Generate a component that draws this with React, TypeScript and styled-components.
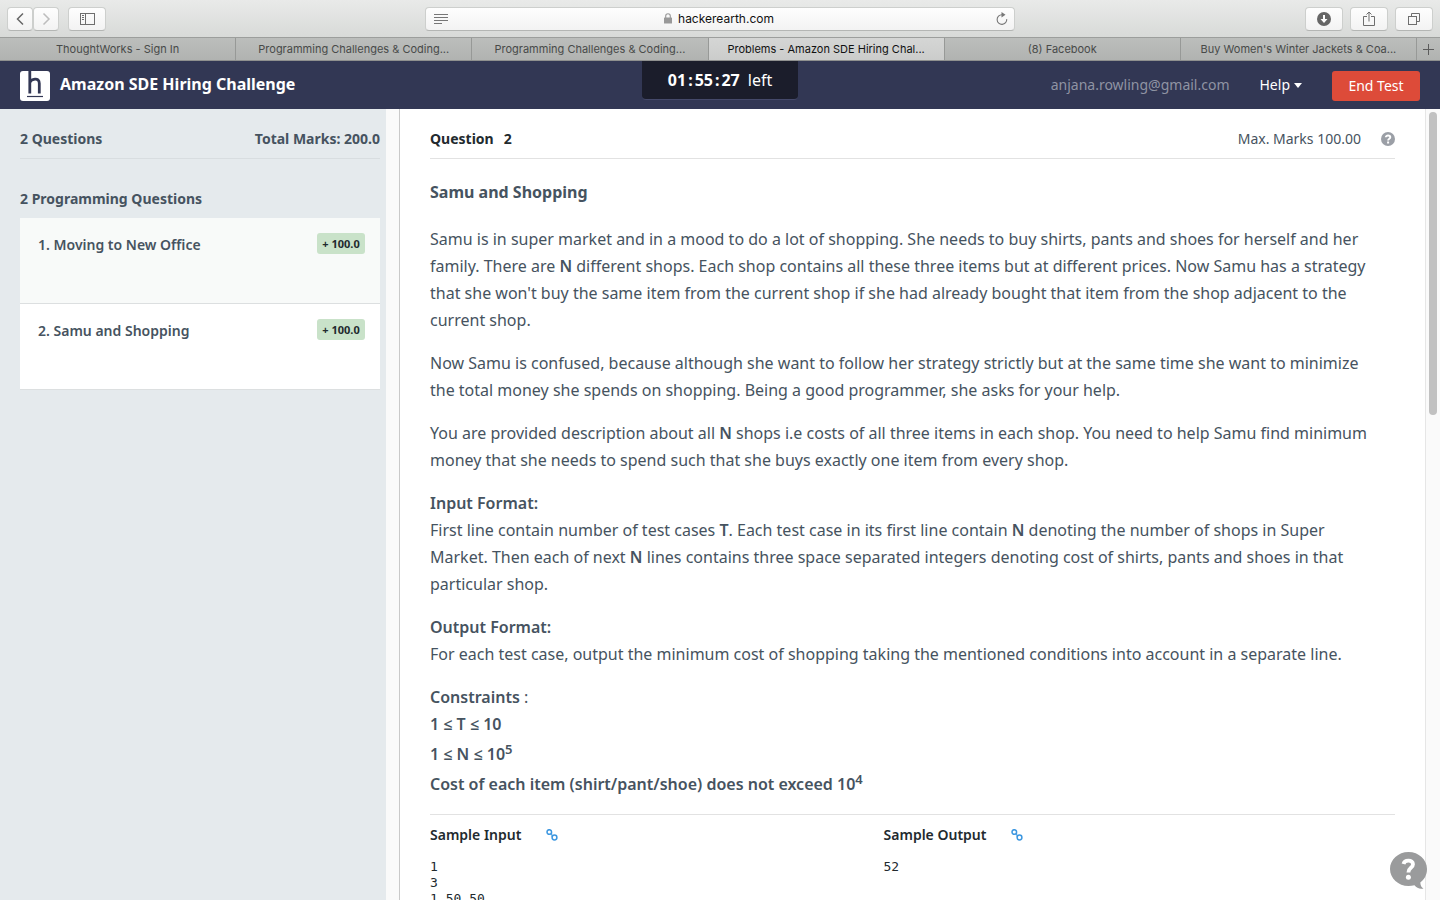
import React from "react";
import styled, { createGlobalStyle } from "styled-components";

const GlobalStyle = createGlobalStyle`
  *, *::before, *::after { box-sizing: border-box; }
  body {
    margin: 0;
    background: #fff;
    color: #465360;
    font-family: "Noto Sans", "Open Sans", sans-serif;
    font-size: 14px;
    line-height: 20px;
  }
  h1, h2, h3, p, pre, ol { margin: 0; padding: 0; }
  button { font: inherit; color: inherit; border: 0; margin: 0; padding: 0; background: none; cursor: pointer; }
  a { color: inherit; text-decoration: none; }
`;

const Page = styled.div`
  display: flex;
  flex-direction: column;
  height: 100vh;
  overflow: hidden;
`;

/* Browser chrome */

const Toolbar = styled.div`
  flex: none;
  display: grid;
  grid-template-columns: 1fr minmax(200px, 590px) 1fr;
  align-items: center;
  height: 37px;
  padding: 0 7px;
  background: linear-gradient(#e9eae9, #d8dad8);
`;

const ToolGroup = styled.div<{ $gap: number; $end?: boolean }>`
  display: flex;
  gap: ${(p) => p.$gap}px;
  justify-content: ${(p) => (p.$end ? "flex-end" : "flex-start")};
`;

const ToolButton = styled.button<{ $narrow?: boolean }>`
  display: flex;
  align-items: center;
  justify-content: center;
  width: ${(p) => (p.$narrow ? 26 : 38)}px;
  height: 24px;
  border: 1px solid #cdcfcd;
  border-bottom-color: #b4b6b4;
  border-radius: 4px;
  background: linear-gradient(#fefefe, #f3f3f3);
  color: #6e6e6e;
`;

const AddressBar = styled.div`
  display: grid;
  grid-template-columns: 16px 1fr 16px;
  align-items: center;
  height: 24px;
  padding: 0 2px 0 8px;
  border: 1px solid #cdcfcd;
  border-bottom-color: #b4b6b4;
  border-radius: 4px;
  background: linear-gradient(#fefefe, #f3f3f3);
  color: #777;
`;

const Address = styled.div`
  display: flex;
  align-items: center;
  justify-content: center;
  gap: 6px;
  padding-right: 8px;
  color: #111;
  font: 12px/16px Inter, sans-serif;
`;

const Tabs = styled.nav`
  flex: none;
  display: flex;
  height: 24px;
  border-top: 1px solid #9c9e9c;
  border-bottom: 1px solid #8f908f;
  background: linear-gradient(#bcbebc, #b1b3b1);
  font: 11px/22px Inter, sans-serif;
`;

const Tab = styled.a<{ $active?: boolean }>`
  flex: 1 1 0;
  min-width: 0;
  padding: 0 8px;
  border-right: 1px solid #979997;
  background: ${(p) => (p.$active ? "linear-gradient(#d5d6d5, #cbcccb)" : "none")};
  color: ${(p) => (p.$active ? "#111" : "#484a49")};
  text-align: center;
  white-space: nowrap;
  overflow: hidden;
`;

const NewTab = styled.button`
  flex: none;
  display: flex;
  align-items: center;
  justify-content: center;
  width: 23px;
  color: #5c5c5c;
`;

/* Test header */

const Header = styled.header`
  flex: none;
  display: grid;
  grid-template-columns: 1fr auto 1fr;
  height: 48px;
  padding: 0 20px;
  background: #323754;
  color: #fff;
`;

const Brand = styled.div`
  display: flex;
  align-items: flex-start;
  gap: 10px;
  padding-top: 10px;
`;

const BrandTitle = styled.h1`
  font-size: 16px;
  line-height: 26px;
  font-weight: 700;
`;

const Timer = styled.div`
  display: flex;
  justify-content: center;
  gap: 8px;
  width: 156px;
  height: 39px;
  border-radius: 0 0 4px 4px;
  border-bottom: 1px solid #45496a;
  background: #1b1d2b;
  font-size: 16px;
  line-height: 38px;
`;

const Clock = styled.b`
  display: flex;
  gap: 2px;
`;

const Account = styled.div`
  display: flex;
  align-items: flex-start;
  justify-content: flex-end;
  gap: 30px;
  padding-top: 10px;
  line-height: 28px;
`;

const Email = styled.span`
  color: #8f93a3;
`;

const HelpMenu = styled.button`
  display: flex;
  align-items: center;
  gap: 4px;
`;

const EndTest = styled.button`
  width: 88px;
  height: 30px;
  border-radius: 3px;
  background: #dd4b39;
  color: #fff;
`;

/* Body */

const Body = styled.div`
  flex: 1;
  min-height: 0;
  display: flex;
`;

const Sidebar = styled.aside`
  flex: none;
  display: flex;
  width: 400px;
  background: #e5eaed;
  border-right: 1px solid #c9c9c9;
`;

const SidebarContent = styled.div`
  flex: 1;
  padding: 0 6px 0 20px;
  font-weight: 700;
`;

const Gutter = styled.div<{ $line?: boolean }>`
  flex: none;
  width: ${(p) => (p.$line ? 15 : 13)}px;
  padding: 3px 3px 0;
  border-left: ${(p) => (p.$line ? "1px solid #e6e6e6" : "0")};
  background: #fafafa;
`;

const Thumb = styled.div`
  width: 8px;
  height: 303px;
  border-radius: 4px;
  background: #c1c1c1;
`;

const Bar = styled.div`
  display: flex;
  align-items: center;
  justify-content: space-between;
  height: 50px;
  padding-top: 10px;
  border-bottom: 1px solid #d8dde0;
`;

const SectionTitle = styled.h2`
  margin-top: 30px;
  padding-bottom: 9px;
  font-size: 14px;
  line-height: 20px;
  font-weight: 700;
`;

const QuestionList = styled.ol`
  list-style: none;
`;

const QuestionItem = styled.li<{ $current?: boolean }>`
  border-bottom: 1px solid #dcdfe0;
  background: ${(p) => (p.$current ? "#fff" : "#f8faf9")};
`;

const QuestionLink = styled.a`
  display: flex;
  justify-content: space-between;
  align-items: flex-start;
  height: 85px;
  padding: 15px 15px 0 18px;
  font-weight: 600;
  line-height: 24px;
`;

const Marks = styled.span`
  width: 48px;
  border-radius: 3px;
  background: #c9e2c9;
  color: #222a2e;
  font-size: 11px;
  line-height: 21px;
  font-weight: 700;
  text-align: center;
`;

const Main = styled.main`
  flex: 1;
  min-width: 0;
  padding: 0 30px;
  overflow: hidden;
`;

const MainBar = styled(Bar)`
  border-bottom-color: #e2e2e2;
`;

const QuestionNumber = styled.h2`
  display: flex;
  gap: 10px;
  color: #222a2e;
  font-size: 14px;
  line-height: 20px;
  font-weight: 700;
`;

const MaxMarks = styled.div`
  display: flex;
  align-items: center;
  gap: 20px;
`;

const Problem = styled.article`
  padding: 20px 0 16px;
  border-bottom: 1px solid #e2e2e2;
  font-size: 16px;
  line-height: 27px;
`;

const ProblemTitle = styled.h3`
  margin-bottom: 20px;
  font-size: 16px;
  font-weight: 700;
`;

const Paragraph = styled.p`
  padding-right: 16px;
  & + & { margin-top: 16px; }
`;

const Strong = styled.strong`
  font-weight: 600;
`;

const ConstraintLine = styled.span<{ $tall?: boolean }>`
  display: block;
  padding-top: ${(p) => (p.$tall ? 3 : 0)}px;
  font-weight: 600;
`;

const Power = styled.sup`
  font-size: 13px;
  line-height: 0;
`;

const Samples = styled.section`
  display: grid;
  grid-template-columns: 47fr 53fr;
  padding-top: 10px;
  color: #222a2e;
`;

const SampleHead = styled.h3`
  display: flex;
  align-items: center;
  gap: 25px;
  margin-bottom: 14px;
  font-size: 14px;
  line-height: 20px;
  font-weight: 600;
`;

const SampleText = styled.pre`
  font: 13px/16px "DejaVu Sans Mono", monospace;
`;

const CopyLink = styled.a`
  display: flex;
  color: #3c97e0;
`;

const Support = styled.button`
  position: absolute;
  right: 13px;
  bottom: 10px;
  width: 37px;
  height: 38px;
`;

/* Icons */

const Chevron = ({ right }: { right?: boolean }) => (
  <svg width="10" height="14" viewBox="0 0 10 14" fill="none" stroke={right ? "#bdbdbd" : "#666"} strokeWidth="1.5">
    <path d={right ? "M2.500 1.500 8 7 2.500 12.500" : "M8 1.500 2.500 7 8 12.500"} />
  </svg>
);

const SidebarIcon = () => (
  <svg width="15" height="12" viewBox="0 0 15 12" fill="none" stroke="currentColor">
    <rect x=".5" y=".5" width="14" height="11" />
    <path d="M5.500 0v12M2 2.500h2M2 4.500h2M2 6.500h2" />
  </svg>
);

const ReaderIcon = () => (
  <svg width="14" height="12" viewBox="0 0 14 12" stroke="currentColor">
    <path d="M0 1.500h14M0 4.500h14M0 7.500h14M0 10.500h8" />
  </svg>
);

const LockIcon = () => (
  <svg width="8" height="11" viewBox="0 0 8 11">
    <rect y="4.500" width="8" height="6" rx=".6" fill="#999" />
    <path d="M1.700 5V3a2.300 2.300 0 0 1 4.600 0v2" fill="none" stroke="#999" strokeWidth="1.100" />
  </svg>
);

const ReloadIcon = () => (
  <svg width="12" height="14" viewBox="0 0 12 14">
    <path d="M6 2.800a4.800 4.800 0 1 0 4.700 4.300" fill="none" stroke="currentColor" strokeWidth="1.100" />
    <path d="M5.500 0 9.500 2.800 5.500 5.500z" fill="currentColor" />
  </svg>
);

const DownloadIcon = () => (
  <svg width="14" height="14" viewBox="0 0 14 14">
    <circle cx="7" cy="7" r="7" fill="#666" />
    <path d="M6 3h2v4h2.500L7 11 3.500 7H6z" fill="#fff" />
  </svg>
);

const ShareIcon = () => (
  <svg width="12" height="16" viewBox="0 0 12 16" fill="none" stroke="currentColor">
    <path d="M4 5.500H.5v9h11v-9H8M6 10.500V1M3.500 3.500 6 1l2.500 2.500" />
  </svg>
);

const WindowsIcon = () => (
  <svg width="12" height="12" viewBox="0 0 12 12" fill="none" stroke="currentColor">
    <rect x=".5" y="3.500" width="8" height="8" />
    <path d="M3.500 3V.5h8v8H9" />
  </svg>
);

const PlusIcon = () => (
  <svg width="11" height="11" viewBox="0 0 11 11" stroke="currentColor">
    <path d="M5.500 0v11M0 5.500h11" />
  </svg>
);

const Logo = () => (
  <svg width="30" height="30" viewBox="0 0 30 30">
    <rect width="30" height="30" rx="3" fill="#fff" />
    <path d="M9.800 0V22.500M9.800 11.500C11 8 19.300 5.500 19.300 12.500V22.500" fill="none" stroke="#323754" strokeWidth="2.800" />
    <path d="M7 25.500h16" stroke="#323754" strokeWidth="1.200" />
  </svg>
);

const Caret = () => (
  <svg width="8" height="5" viewBox="0 0 8 5" fill="currentColor">
    <path d="M0 0h8L4 5z" />
  </svg>
);

const QuestionIcon = () => (
  <svg width="14" height="14" viewBox="0 0 14 14">
    <circle cx="7" cy="7" r="7" fill="#9b9fa6" />
    <path d="M4.800 5.300C4.800 2.900 9.300 3 9.300 5.300 9.300 6.800 7.100 6.700 7.100 8.500" fill="none" stroke="#fff" strokeWidth="1.900" />
    <rect x="6.100" y="9.500" width="2" height="2" fill="#fff" />
  </svg>
);

const ChainIcon = () => (
  <svg width="12" height="12" viewBox="0 0 12 12" fill="none" stroke="currentColor" strokeWidth="1.500">
    <circle cx="3.300" cy="3" r="2.300" />
    <circle cx="8.500" cy="8.500" r="2.400" />
    <path d="M4.600 5.600 6.200 4.800M5.400 7.200 7 6.200" strokeWidth="1.200" />
  </svg>
);

const SupportIcon = () => (
  <svg width="37" height="38" viewBox="0 0 37 38">
    <path d="M18.500 0C28.700 0 37 7.700 37 17c0 6-2.700 10.500-6.700 13.500.2 3 1 4.800 3.200 6-4 .8-6.800-.6-9-3.200-2 .6-4 .7-6 .7C8.300 34 0 26.300 0 17S8.300 0 18.500 0z" fill="#9a9b9c" />
    <path d="M13.500 12C14.500 7.200 23 7.500 23 12.200 23 16.200 18.400 15.500 18.400 20.500" fill="none" stroke="#fff" strokeWidth="3.800" />
    <circle cx="18.400" cy="25.200" r="2.500" fill="#fff" />
  </svg>
);

const tabs = [
  "ThoughtWorks - Sign In",
  "Programming Challenges & Coding...",
  "Programming Challenges & Coding...",
  "Problems - Amazon SDE Hiring Chal...",
  "(8) Facebook",
  "Buy Women's Winter Jackets & Coa...",
];

const questions = ["1. Moving to New Office", "2. Samu and Shopping"];

export default function App() {
  return (
    <Page>
      <GlobalStyle />
      <Toolbar>
        <ToolGroup $gap={9}>
          <ToolGroup $gap={0}>
            <ToolButton $narrow aria-label="Back"><Chevron /></ToolButton>
            <ToolButton $narrow aria-label="Forward"><Chevron right /></ToolButton>
          </ToolGroup>
          <ToolButton aria-label="Show sidebar"><SidebarIcon /></ToolButton>
        </ToolGroup>
        <AddressBar>
          <ReaderIcon />
          <Address><LockIcon />hackerearth.com</Address>
          <ReloadIcon />
        </AddressBar>
        <ToolGroup $gap={7} $end>
          <ToolButton aria-label="Downloads"><DownloadIcon /></ToolButton>
          <ToolButton aria-label="Share"><ShareIcon /></ToolButton>
          <ToolButton aria-label="Show all tabs"><WindowsIcon /></ToolButton>
        </ToolGroup>
      </Toolbar>
      <Tabs>
        {tabs.map((label, i) => (
          <Tab key={i} href="#" $active={i === 3}>{label}</Tab>
        ))}
        <NewTab aria-label="New tab"><PlusIcon /></NewTab>
      </Tabs>
      <Header>
        <Brand>
          <Logo />
          <BrandTitle>Amazon SDE Hiring Challenge</BrandTitle>
        </Brand>
        <Timer>
          <Clock>
            <span>01</span><span>:</span><span>55</span><span>:</span><span>27</span>
          </Clock>
          <span>left</span>
        </Timer>
        <Account>
          <Email>anjana.rowling@gmail.com</Email>
          <HelpMenu>Help <Caret /></HelpMenu>
          <EndTest>End Test</EndTest>
        </Account>
      </Header>
      <Body>
        <Sidebar>
          <SidebarContent>
            <Bar><span>2 Questions</span><span>Total Marks: 200.0</span></Bar>
            <SectionTitle>2 Programming Questions</SectionTitle>
            <QuestionList>
              {questions.map((title, i) => (
                <QuestionItem key={title} $current={i === 1}>
                  <QuestionLink href="#">{title}<Marks>+ 100.0</Marks></QuestionLink>
                </QuestionItem>
              ))}
            </QuestionList>
          </SidebarContent>
          <Gutter />
        </Sidebar>
        <Main>
          <MainBar>
            <QuestionNumber><span>Question</span><span>2</span></QuestionNumber>
            <MaxMarks>Max. Marks 100.00 <QuestionIcon /></MaxMarks>
          </MainBar>
          <Problem>
            <ProblemTitle>Samu and Shopping</ProblemTitle>
            <Paragraph>
              Samu is in super market and in a mood to do a lot of shopping. She needs to buy shirts, pants and shoes for herself and her
              family. There are <Strong>N</Strong> different shops. Each shop contains all these three items but at different prices. Now Samu has a strategy
              that she won't buy the same item from the current shop if she had already bought that item from the shop adjacent to the
              current shop.
            </Paragraph>
            <Paragraph>
              Now Samu is confused, because although she want to follow her strategy strictly but at the same time she want to minimize
              the total money she spends on shopping. Being a good programmer, she asks for your help.
            </Paragraph>
            <Paragraph>
              You are provided description about all <Strong>N</Strong> shops i.e costs of all three items in each shop. You need to help Samu find minimum
              money that she needs to spend such that she buys exactly one item from every shop.
            </Paragraph>
            <Paragraph>
              <Strong>Input Format:</Strong><br />
              First line contain number of test cases <Strong>T</Strong>. Each test case in its first line contain <Strong>N</Strong> denoting the number of shops in Super
              Market. Then each of next <Strong>N</Strong> lines contains three space separated integers denoting cost of shirts, pants and shoes in that
              particular shop.
            </Paragraph>
            <Paragraph>
              <Strong>Output Format:</Strong><br />
              For each test case, output the minimum cost of shopping taking the mentioned conditions into account in a separate line.
            </Paragraph>
            <Paragraph>
              <Strong>Constraints</Strong> :
              <ConstraintLine>1 ≤ T ≤ 10</ConstraintLine>
              <ConstraintLine $tall>1 ≤ N ≤ 10<Power>5</Power></ConstraintLine>
              <ConstraintLine $tall>Cost of each item (shirt/pant/shoe) does not exceed 10<Power>4</Power></ConstraintLine>
            </Paragraph>
          </Problem>
          <Samples>
            <div>
              <SampleHead>Sample Input <CopyLink href="#" aria-label="Sample input file"><ChainIcon /></CopyLink></SampleHead>
              <SampleText>{"1\n3\n1 50 50\n50 50 50\n1 50 50"}</SampleText>
            </div>
            <div>
              <SampleHead>Sample Output <CopyLink href="#" aria-label="Sample output file"><ChainIcon /></CopyLink></SampleHead>
              <SampleText>52</SampleText>
            </div>
          </Samples>
        </Main>
        <Gutter $line><Thumb /></Gutter>
      </Body>
      <Support aria-label="Support"><SupportIcon /></Support>
    </Page>
  );
}
